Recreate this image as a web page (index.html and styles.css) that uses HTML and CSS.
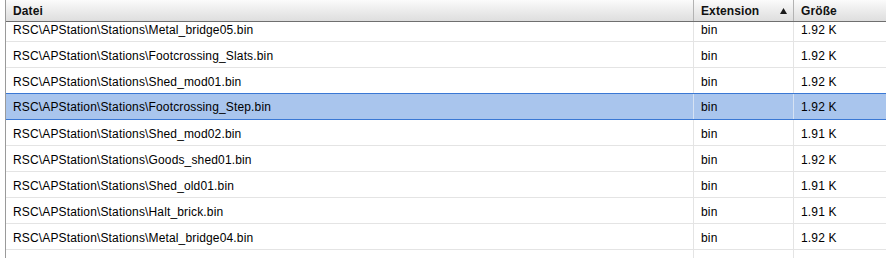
FILE: index.html
```html
<!DOCTYPE html>
<html>
<head>
<meta charset="utf-8">
<link rel="stylesheet" href="styles.css">
</head>
<body>
<div class="grid">
  <div class="head">
    <div class="hcell c1">Datei</div>
    <div class="hcell c2"><span>Extension</span><svg class="sort" width="7" height="6" viewBox="0 0 7 6"><path d="M3.5 0 L7 6 L0 6 Z" fill="#1a1a1a"/></svg></div>
    <div class="hcell c3">Größe</div>
  </div>
  <div class="body">
    <div class="rows">
      <div class="row"><div class="cell c1">RSC\APStation\Stations\Metal_bridge05.bin</div><div class="cell c2">bin</div><div class="cell c3">1.92 K</div></div>
      <div class="row"><div class="cell c1">RSC\APStation\Stations\Footcrossing_Slats.bin</div><div class="cell c2">bin</div><div class="cell c3">1.92 K</div></div>
      <div class="row"><div class="cell c1">RSC\APStation\Stations\Shed_mod01.bin</div><div class="cell c2">bin</div><div class="cell c3">1.92 K</div></div>
      <div class="row selected"><div class="cell c1">RSC\APStation\Stations\Footcrossing_Step.bin</div><div class="cell c2">bin</div><div class="cell c3">1.92 K</div></div>
      <div class="row"><div class="cell c1">RSC\APStation\Stations\Shed_mod02.bin</div><div class="cell c2">bin</div><div class="cell c3">1.91 K</div></div>
      <div class="row"><div class="cell c1">RSC\APStation\Stations\Goods_shed01.bin</div><div class="cell c2">bin</div><div class="cell c3">1.92 K</div></div>
      <div class="row"><div class="cell c1">RSC\APStation\Stations\Shed_old01.bin</div><div class="cell c2">bin</div><div class="cell c3">1.91 K</div></div>
      <div class="row"><div class="cell c1">RSC\APStation\Stations\Halt_brick.bin</div><div class="cell c2">bin</div><div class="cell c3">1.91 K</div></div>
      <div class="row"><div class="cell c1">RSC\APStation\Stations\Metal_bridge04.bin</div><div class="cell c2">bin</div><div class="cell c3">1.92 K</div></div>
      <div class="row"><div class="cell c1"></div><div class="cell c2"></div><div class="cell c3"></div></div>
    </div>
  </div>
</div>
</body>
</html>
```
FILE: styles.css
```css
* { box-sizing: border-box; }
html, body { margin: 0; padding: 0; background: #fff; }
body {
  width: 886px;
  height: 258px;
  overflow: hidden;
  font-family: "Liberation Sans", Arial, sans-serif;
  font-size: 12px;
  color: #000;
}
.grid {
  margin-left: 5px;
  height: 258px;
  border-left: 1px solid #9a9a9a;
  display: flex;
  flex-direction: column;
}
.head {
  display: grid;
  grid-template-columns: 688px 100px 1fr;
  height: 22px;
  flex: none;
  background: linear-gradient(#fbfbfb, #e9e9e9 60%, #dedede);
  border-bottom: 1px solid #6f6f6f;
}
.hcell {
  font-weight: bold;
  line-height: 20px;
  padding-top: 1px;
  padding-left: 7px;
  color: #111;
  letter-spacing: 0.1px;
  display: flex;
  align-items: center;
}
.hcell.c1, .hcell.c2 { border-right: 1px solid #b3b3b3; }
.hcell.c2 { justify-content: space-between; padding-right: 6px; }
.sort { margin-top: 0; }
.body {
  flex: 1;
  overflow: hidden;
}
.rows { margin-top: -6px; }
.row {
  display: grid;
  grid-template-columns: 688px 100px 1fr;
  height: 26px;
  border-bottom: 1px solid #e4e4e4;
}
.cell {
  line-height: 21px;
  padding-top: 4px;
  padding-left: 7px;
  letter-spacing: 0.15px;
  white-space: nowrap;
  overflow: hidden;
}
.cell.c1, .cell.c2 { border-right: 1px solid #e4e4e4; }
.row.selected {
  background: #a9c5ed;
  height: 27px;
  margin-top: -1px;
  border-top: 1px solid #3a78d4;
  border-bottom: 1px solid #3a78d4;
  box-shadow: -1px 0 0 #3a78d4;
}
.row.selected .cell { padding-top: 3px; }
.row.selected .cell.c1, .row.selected .cell.c2 { border-right-color: #d6e2f3; }
```
